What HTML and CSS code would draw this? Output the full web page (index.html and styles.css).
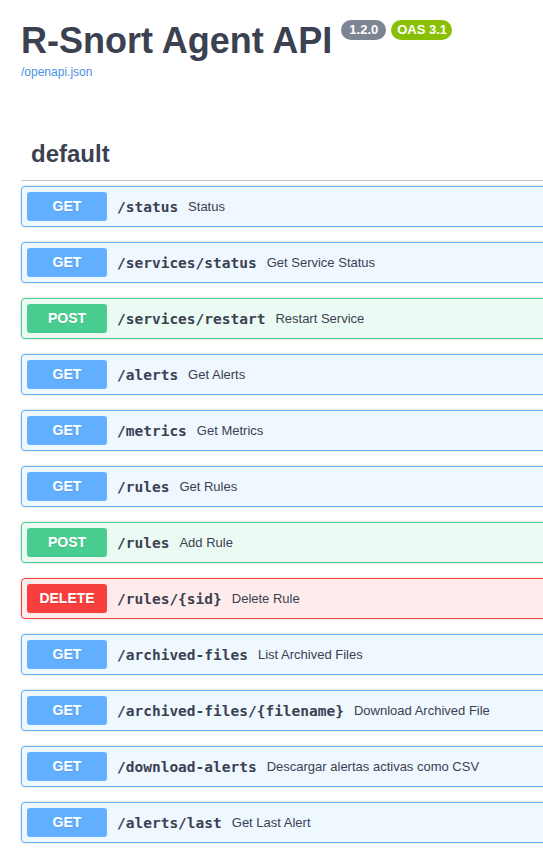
FILE: index.html
```html
<!DOCTYPE html>
<html lang="en">
<head>
<meta charset="utf-8">
<title>R-Snort Agent API</title>
<link rel="stylesheet" href="styles.css">
</head>
<body>
<div class="page">
  <div class="info">
    <div class="title-row">
      <h2 class="title">R-Snort Agent API</h2>
      <span class="badge version">1.2.0</span>
      <span class="badge oas">OAS 3.1</span>
    </div>
    <a class="link" href="#">/openapi.json</a>
  </div>
  <section class="tag">
    <h3 class="tag-title">default</h3>
    <div class="opblock get"><span class="method">GET</span><span class="path">/status</span><span class="desc">Status</span></div>
    <div class="opblock get"><span class="method">GET</span><span class="path">/services/status</span><span class="desc">Get Service Status</span></div>
    <div class="opblock post"><span class="method">POST</span><span class="path">/services/restart</span><span class="desc">Restart Service</span></div>
    <div class="opblock get"><span class="method">GET</span><span class="path">/alerts</span><span class="desc">Get Alerts</span></div>
    <div class="opblock get"><span class="method">GET</span><span class="path">/metrics</span><span class="desc">Get Metrics</span></div>
    <div class="opblock get"><span class="method">GET</span><span class="path">/rules</span><span class="desc">Get Rules</span></div>
    <div class="opblock post"><span class="method">POST</span><span class="path">/rules</span><span class="desc">Add Rule</span></div>
    <div class="opblock delete"><span class="method">DELETE</span><span class="path">/rules/{sid}</span><span class="desc">Delete Rule</span></div>
    <div class="opblock get"><span class="method">GET</span><span class="path">/archived-files</span><span class="desc">List Archived Files</span></div>
    <div class="opblock get"><span class="method">GET</span><span class="path">/archived-files/{filename}</span><span class="desc">Download Archived File</span></div>
    <div class="opblock get"><span class="method">GET</span><span class="path">/download-alerts</span><span class="desc">Descargar alertas activas como CSV</span></div>
    <div class="opblock get"><span class="method">GET</span><span class="path">/alerts/last</span><span class="desc">Get Last Alert</span></div>
  </section>
</div>
</body>
</html>
```
FILE: styles.css
```css
html, body {
  margin: 0;
  padding: 0;
  background: #fff;
  overflow: hidden;
}

body {
  font-family: "Liberation Sans", Arial, sans-serif;
  color: #3b4151;
}

.page {
  width: 640px;
  padding: 0 0 0 21px;
}

.info {
  padding-top: 20px;
}

.title-row {
  display: flex;
  align-items: flex-start;
}

.title {
  margin: 0;
  font-size: 36px;
  line-height: 41px;
  font-weight: 700;
  color: #3b4151;
}

.badge {
  margin-top: 0;
  height: 20px;
  line-height: 20px;
  border-radius: 10px;
  color: #fff;
  font-size: 13px;
  font-weight: 700;
}

.version {
  margin-left: 9px;
  padding: 0 8px;
  background: #7d8492;
}

.oas {
  margin-left: 5px;
  padding: 0 5px 0 6px;
  background: #89bf04;
}

.link {
  display: block;
  margin-top: 4px;
  font-size: 12px;
  line-height: 14px;
  color: #4990e2;
  text-decoration: none;
}

.tag {
  margin-top: 53px;
}

.tag-title {
  margin: 0 0 5px;
  padding: 8px 20px 12px 10px;
  font-size: 24px;
  line-height: 28px;
  font-weight: 700;
  border-bottom: 1px solid rgba(59, 65, 81, 0.3);
}

.opblock {
  display: flex;
  align-items: center;
  padding: 5px;
  margin-bottom: 15px;
  border: 1px solid;
  border-radius: 4px;
  box-shadow: 0 0 3px rgba(0, 0, 0, 0.19);
}

.method {
  flex: none;
  width: 80px;
  padding: 6px 0;
  line-height: 17px;
  text-align: center;
  font-size: 14px;
  font-weight: 700;
  color: #fff;
  border-radius: 3px;
  text-shadow: 0 1px 0 rgba(0, 0, 0, 0.1);
}

.path {
  padding: 0 10px;
  font-family: "DejaVu Sans Mono", "Liberation Mono", monospace;
  font-size: 14.5px;
  font-weight: 700;
  color: #3b4151;
}

.desc {
  font-size: 13px;
  color: #3b4151;
}

.get {
  background: rgba(97, 175, 254, 0.1);
  border-color: #61affe;
}
.get .method { background: #61affe; }

.post {
  background: rgba(73, 204, 144, 0.1);
  border-color: #49cc90;
}
.post .method { background: #49cc90; }

.delete {
  background: rgba(249, 62, 62, 0.1);
  border-color: #f93e3e;
}
.delete .method { background: #f93e3e; }
```
